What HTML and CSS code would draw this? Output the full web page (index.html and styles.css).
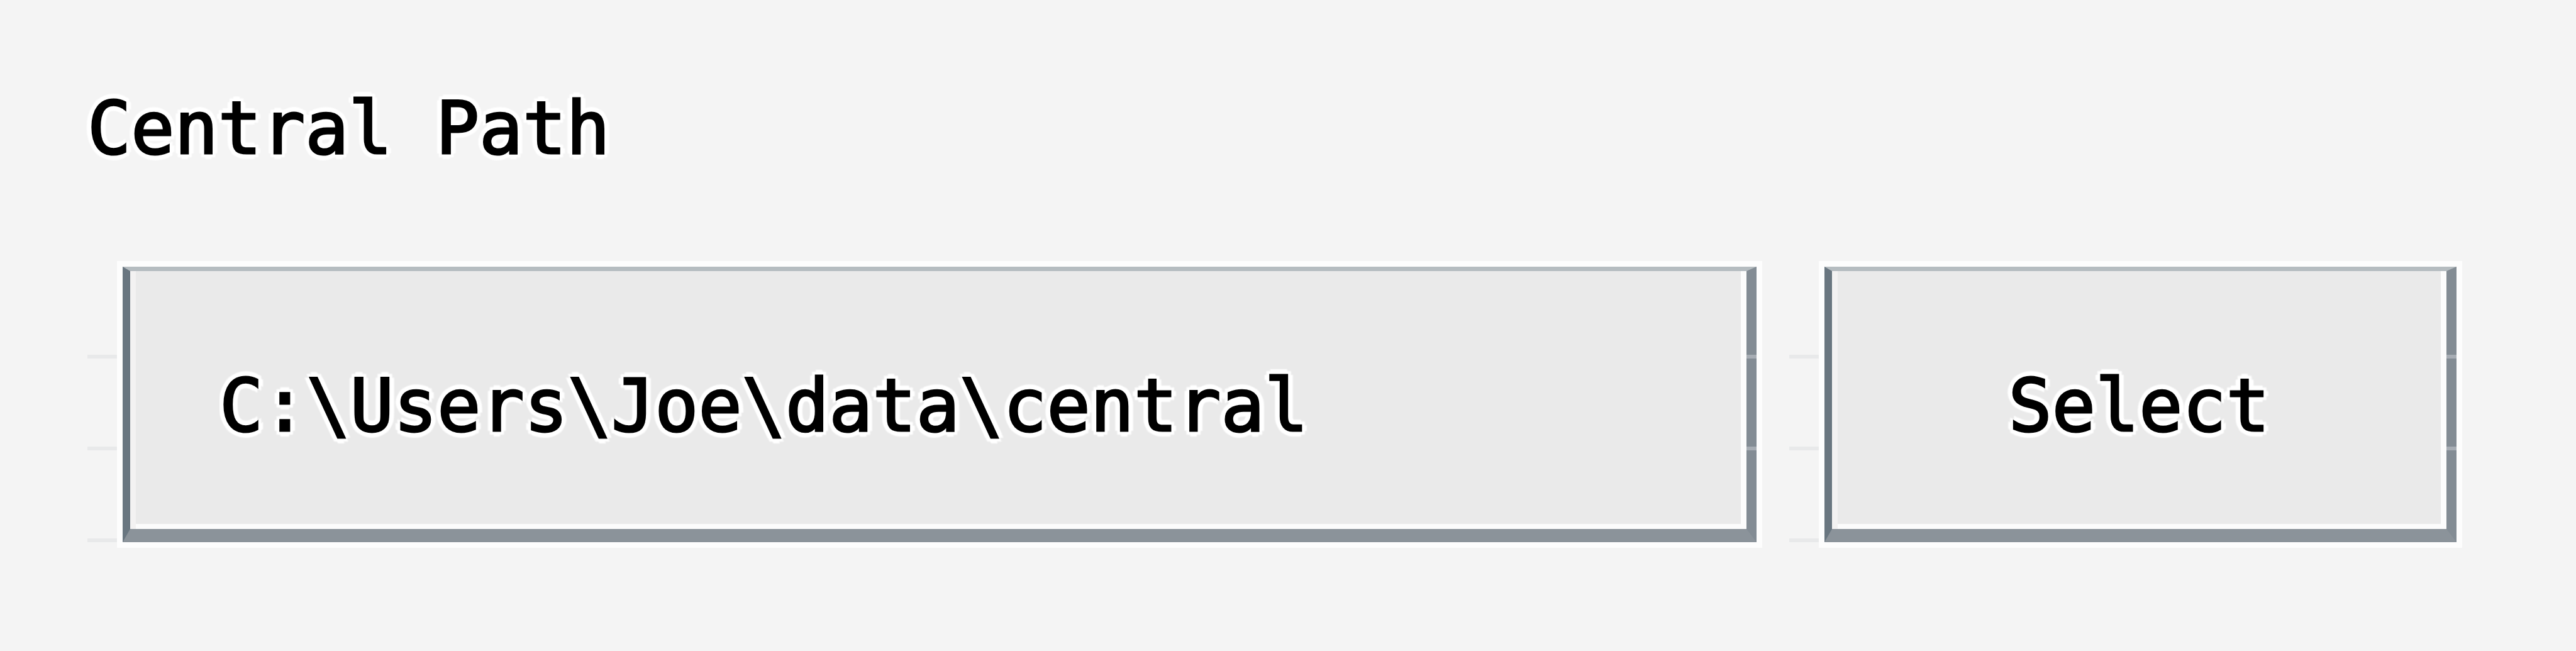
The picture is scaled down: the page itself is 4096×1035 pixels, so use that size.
FILE: index.html
```html
<!DOCTYPE html>
<html lang="en">
<head>
<meta charset="utf-8">
<title>Central Path</title>
<link rel="stylesheet" href="styles.css">
</head>
<body>
<main class="panel">
  <label class="title" for="central-path">Central Path</label>
  <div class="row">
    <div class="field">
      <div class="rail"><i></i><i></i><i></i></div>
      <div class="frame"><input class="control path" id="central-path" type="text" value="C:\Users\Joe\data\central" spellcheck="false"></div>
    </div>
    <div class="field">
      <div class="rail"><i></i><i></i><i></i></div>
      <div class="frame"><button class="control" type="button">Select</button></div>
    </div>
  </div>
</main>
</body>
</html>
```

FILE: styles.css
```css
* { box-sizing: border-box; }

body {
  margin: 0;
  background: #f4f4f4;
  color: #000;
  font: 115px/136px "DejaVu Sans Mono", monospace;
}

.panel {
  display: flex;
  flex-direction: column;
  gap: 152px;
  padding: 136px 190px 172px 139px;
}

.title,
.control {
  -webkit-text-stroke: 3px #000;
  text-shadow:
    9px 0 2px #fff, -9px 0 2px #fff, 0 9px 2px #fff, 0 -9px 2px #fff,
    6px 6px 2px #fff, -6px 6px 2px #fff, 6px -6px 2px #fff, -6px -6px 2px #fff;
}

.row {
  display: grid;
  grid-template-columns: 5fr 2fr;
  gap: 52px;
}

.field {
  display: flex;
}

.rail {
  display: grid;
  grid-template-rows: repeat(3, 1fr);
  width: 56px;
}

.rail i {
  border-bottom: 6px solid #e8e9ea;
}

.frame {
  position: relative;
  flex: 1;
  min-width: 0;
  box-shadow: 0 0 0 9px #fdfdfd;
}

/* Notches across the right edge, level with the rail ticks */
.frame::after {
  content: "";
  position: absolute;
  top: 0;
  right: 0;
  width: 16px;
  height: 100%;
  background:
    linear-gradient(#a7adb4, #a7adb4) 0 140px / 16px 6px no-repeat,
    linear-gradient(#a7adb4, #a7adb4) 0 286px / 16px 6px no-repeat;
}

.control {
  display: block;
  width: 100%;
  height: 438px;
  margin: 0;
  padding: 18px 0 0;
  border: solid;
  border-width: 7px 16px 21px 12px;
  border-color: #b5bcc0 #838c94 #8b939a #697680;
  border-radius: 0;
  outline: 0;
  background: #eaeaea;
  box-shadow: inset 9px 0 #f3f2f2, inset -9px -8px #fcfcfc;
  color: inherit;
  font: inherit;
}

.path {
  padding-left: 142px;
}
```
